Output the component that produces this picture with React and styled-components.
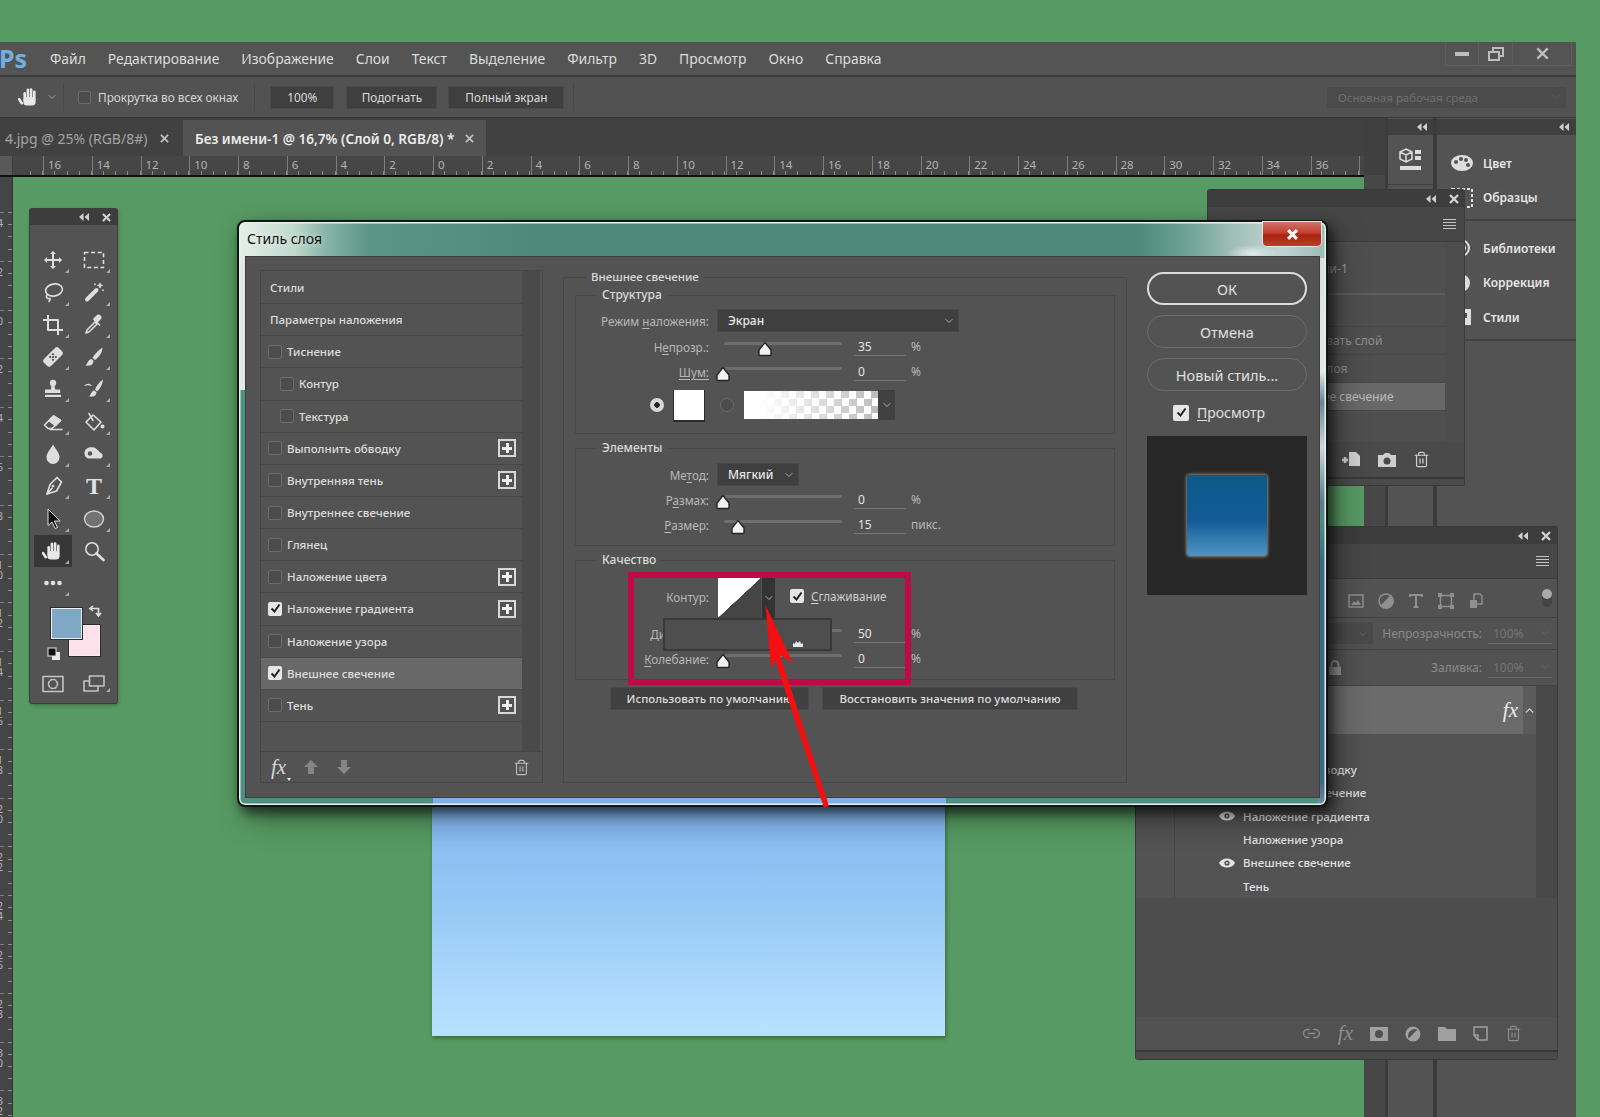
import React from 'react';
import styled, { createGlobalStyle } from 'styled-components';
import { Trash2, Link2, ChevronDown, ChevronUp } from 'lucide-react';

const Global = createGlobalStyle`
  html, body { margin: 0; padding: 0; background: #579a63; }
  * { box-sizing: border-box; }
  body { font-family: "Noto Sans", "Open Sans", sans-serif; }
`;

const Page = styled.div`
  position: relative; width: 1600px; height: 1117px; overflow: hidden;
  background: #579a63; padding-top: 42px; color: #ddd; font-size: 12px;
`;
const Workspace = styled.div`width: 1576px; height: 1075px; background: #535353; display: flex; flex-direction: column;`;

/* ---------- menu ---------- */
const MenuBar = styled.div`
  height: 35px; flex: none; display: flex; align-items: center; position: relative;
  border-bottom: 2px solid #3c3c3c; background: #545454;
`;
const Logo = styled.span`font: 700 25px/1 "Noto Sans", sans-serif; color: #74aee0; margin: 0 22px 0 -1px; width: 29px;`;
const MenuItems = styled.nav`display: flex; gap: 22px;`;
const MenuItem = styled.span`font-size: 13.9px; color: #dcdcdc;`;
const WinControls = styled.div`
  margin-left: auto; display: flex; height: 24px; align-self: flex-start; margin-right: 4px;
  border: 1px solid #5f5f5f; border-top: 0;
`;
const WinCell = styled.div`
  width: ${p => p.$w}px; display: flex; align-items: center; justify-content: center;
  & + & { border-left: 1px solid #5f5f5f; }
`;

/* ---------- options ---------- */
const OptionsBar = styled.div`
  height: 41px; flex: none; display: flex; align-items: center; background: #525252;
  border-bottom: 1px solid #3a3a3a; padding-left: 18px;
`;
const OptSep = styled.div`width: 1px; height: 28px; background: #484848; margin: 0 ${p => p.$r}px 0 ${p => p.$l}px;`;
const OptChev = styled.span`margin-left: 6px; display: flex;`;
const OptLabel = styled.span`font-size: 11.8px; color: #d6d6d6; margin-left: 7px;`;
const OptButton = styled.div`
  height: 21px; width: ${p => p.$w}px; margin-right: ${p => p.$mr}px; background: #3f3f3f; color: #ddd;
  font-size: 11.8px; display: flex; align-items: center; justify-content: center; box-shadow: 0 0 0 1px #4a4a4a;
`;
const WorkspaceSelect = styled.div`
  margin-left: auto; margin-right: 10px; width: 239px; height: 21px; background: #4b4b4b; color: #6f6f6f;
  font-size: 11.5px; display: flex; align-items: center; justify-content: space-between; padding: 0 4px 0 11px;
`;

/* ---------- main ---------- */
const Main = styled.div`flex: 1; display: flex; min-height: 0;`;
const DocColumn = styled.div`width: 1364px; flex: none; display: flex; flex-direction: column;`;
const TabBar = styled.div`height: 38px; flex: none; display: flex; background: #414141; padding-top: 2px;`;
const Tab = styled.div`
  width: ${p => p.$w}px; display: flex; align-items: center; padding-left: ${p => p.$pl}px; white-space: nowrap;
  background: ${p => p.$active ? '#535353' : 'transparent'};
  color: ${p => p.$active ? '#ececec' : '#a4a4a4'}; font-size: ${p => p.$active ? 13.6 : 14}px; font-weight: ${p => p.$active ? 600 : 400};
`;
const TabText = styled.span`width: ${p => p.$w}px; flex: none; overflow: hidden;`;
const HRuler = styled.div`
  height: 21px; flex: none; display: flex; background:
    repeating-linear-gradient(90deg, #8d8d8d 0 1px, transparent 1px 12.18px) 30px 100% / 100% 4px no-repeat, #464646;
  border-bottom: 2px solid #111; overflow: hidden;
`;
const RulerCorner = styled.div`width: 13px; flex: none; background: #595959; border-right: 1px solid #3c3c3c;`;
const RulerCells = styled.div`display: flex; padding-left: 30px;`;
const RulerCell = styled.div`
  width: 48.75px; flex: none; border-left: 1px solid #7e7e7e; color: #b4b4b4; font-size: 11.5px; line-height: 18px; padding-left: 4px;
`;
const CanvasRow = styled.div`flex: 1; display: flex; min-height: 0;`;
const VRuler = styled.div`
  width: 13px; flex: none; overflow: hidden; padding-top: 35px; border-right: 1px solid #333; background:
    repeating-linear-gradient(180deg, #8d8d8d 0 1px, transparent 1px 12.2px) 100% 35px / 4px 100% no-repeat, #454545;
`;
const VRulerCell = styled.div`
  height: 48.8px; border-top: 1px solid #7e7e7e; color: #b4b4b4; font-size: 10.5px; line-height: 10px;
  width: 7px; margin-left: -3px; padding-top: 5px; word-break: break-all;
`;
const Canvas = styled.div`flex: 1; position: relative; background: #579a63;`;
const DocImage = styled.div`
  position: absolute; left: 419px; top: 600px; width: 513px; height: 259px;
  background: linear-gradient(180deg, #7db1ee 0%, #94c6f5 45%, #b8e2ff 100%);
  box-shadow: 1px 2px 4px rgba(0,0,0,.35);
`;

/* ---------- dock ---------- */
const Dock = styled.div`flex: 1; display: flex; background: #3b3b3b;`;
const DockGutter = styled.div`width: 21px; flex: none; background: linear-gradient(180deg, #404040 57px, #474747 57px);`;
const DockIcons = styled.div`width: 45px; flex: none; margin-left: 3px; background: #535353;`;
const DockPanels = styled.div`flex: 1; margin-left: 4px; background: #535353;`;
const DockHead = styled.div`
  height: 16px; margin-top: 1px; background: #3f3f3f; display: flex; align-items: center; justify-content: flex-end; padding-right: ${p => p.$r}px;
`;
const DockIconGroup = styled.div`height: 50px; display: flex; align-items: center; justify-content: center; border-bottom: 1px solid #3f3f3f;`;
const DockGroup = styled.div`padding-top: ${p => p.$pt}px; padding-bottom: ${p => p.$pb}px; border-bottom: 2px solid #424242;`;
const DockEntry = styled.div`height: 34.5px; display: flex; align-items: center; padding-left: 14px; gap: 10px; font-weight: 600; font-size: 12px; color: #e6e6e6;`;

/* ---------- floating panels ---------- */
const ToolPanel = styled.div`
  position: absolute; left: 30px; top: 209px; width: 87px; height: 494px; background: #535353;
  box-shadow: 0 0 0 1px #3d3d3d, 1px 2px 4px rgba(0,0,0,.3); border-radius: 2px;
`;
const ToolHead = styled.div`height: 16px; background: #3d3d3d; display: flex; align-items: center; justify-content: flex-end; gap: 13px; padding-right: 6px; margin-bottom: 19px;`;
const ToolGrid = styled.div`display: grid; grid-template-columns: 38px 38px; grid-auto-rows: 32.3px; column-gap: 3px; padding-left: 4px;`;
const ToolCell = styled.div`
  position: relative; display: flex; align-items: center; justify-content: center;
  background: ${p => p.$on ? '#373737' : 'transparent'};
`;
const ToolT = styled.span`font: 700 24px/1 "Liberation Serif", serif; color: #e2e2e2;`;
const Corner = styled.i`
  position: absolute; right: 3px; bottom: 3px; width: 0; height: 0;
  border-left: 4px solid transparent; border-bottom: 4px solid #aaa;
`;
const SwatchArea = styled.div`position: relative; height: 70px; margin-top: 1px;`;
const SwatchTile = styled.div`
  position: absolute; left: ${p => p.$x}px; top: ${p => p.$y}px; width: 31px; height: 31px; background: ${p => p.$c};
  border: 1.5px solid #f0f0f0; box-shadow: 0 0 0 1px #2c2c2c;
`;
const SwatchMark = styled.svg`position: absolute; left: ${p => p.$x}px; top: ${p => p.$y}px;`;
const ToolFoot = styled.div`display: grid; grid-template-columns: 38px 38px; column-gap: 3px; padding-left: 4px; margin-top: 3px;`;

const Float = styled.div`
  position: absolute; left: ${p => p.$x}px; top: ${p => p.$y}px; width: ${p => p.$w}px; height: ${p => p.$h}px;
  background: #4d4d4d; box-shadow: 0 0 0 1px #3a3a3a; display: flex; flex-direction: column; border-radius: 2px;
`;
const FloatHead = styled.div`height: 17px; flex: none; background: #3d3d3d; display: flex; align-items: center; justify-content: flex-end; gap: 13px; padding-right: ${p => p.$r}px;`;
const FloatTabs = styled.div`height: 35px; flex: none; background: #474747; border-bottom: 1px solid #3c3c3c; display: flex; align-items: center; justify-content: flex-end; padding-right: ${p => p.$r}px;`;
const Burger = styled.div`width: 13px; height: 10px; background: repeating-linear-gradient(180deg, #c4c4c4 0 1px, transparent 1px 3px);`;
const HistList = styled.div`flex: 1; margin-right: 19px; background: #4f4f4f;`;
const HistSnap = styled.div`height: 53px; padding: 18px 0 0 68px; color: #9c9c9c; border-bottom: 2px solid #5d5d5d; font-size: 12px;`;
const HistRow = styled.div`
  height: ${p => p.$h}px; display: flex; align-items: center; padding-left: 75px; font-size: 12px; white-space: nowrap;
  background: ${p => p.$on ? '#686868' : 'transparent'}; color: ${p => p.$on ? '#bcbcbc' : '#909090'};
  border-bottom: 1px solid #474747;
`;
const PanelFoot = styled.div`
  height: ${p => p.$h}px; flex: none; display: flex; align-items: center; justify-content: flex-end;
  gap: ${p => p.$gap}px; padding-right: ${p => p.$r}px; background: ${p => p.$bg}; color: ${p => p.$c};
`;
const PanelStrip = styled.div`flex: none; height: ${p => p.$h}px; border-top: 2px solid #393939; background: #4a4a4a;`;

const LayerRow = styled.div`
  height: ${p => p.$h}px; flex: none; display: flex; align-items: center; justify-content: flex-end; gap: ${p => p.$gap || 6}px;
  padding: ${p => p.$pt || 0}px ${p => p.$r}px 0 0; border-bottom: 1px solid #434343; background: #525252; color: #8a8a8a; font-size: 12px;
`;
const BlankSelect = styled.div`width: 75px; height: 21px; margin-right: 3px; background: #494949; display: flex; align-items: center; justify-content: flex-end; padding-right: 4px;`;
const DimField = styled.div`width: 64px; height: 20px; border-bottom: 1px solid #6a6a6a; display: flex; justify-content: space-between; align-items: center; padding: 0 1px 0 5px; color: #747474;`;
const Toggle = styled.div`
  width: 10px; height: 18px; margin: -6px 0 0 ${p => p.$ml}px; border-radius: 5px; background: #444; position: relative;
  &::before { content: ""; position: absolute; left: 0; top: 0; width: 10px; height: 10px; border-radius: 50%; background: #aaa; }
`;
const LockIcon = styled.svg`margin-right: 83px;`;
const LayersBody = styled.div`height: 212px; flex: none; display: flex; background: #484848;`;
const LayersList = styled.div`width: 400px; flex: none; display: flex; flex-direction: column;`;
const LayerItem = styled.div`height: 48px; display: flex; background: #6b6b6b; justify-content: flex-end; align-items: center;`;
const FxMark = styled.span`font: italic 400 ${p => p.$s}px/1 "Liberation Serif", serif; color: ${p => p.$c}; margin-right: ${p => p.$mr || 0}px;`;
const LayerEnd = styled.div`width: 13px; align-self: stretch; background: #5b5b5b; display: flex; align-items: center; justify-content: center;`;
const Effects = styled.div`flex: 1; background: #535353; padding-left: 38px;`;
const EffectsInner = styled.div`height: 100%; border-left: 1px solid #484848; padding-top: 24px;`;
const EffectRow = styled.div`height: 23.3px; display: flex; align-items: center; padding-left: 68px; position: relative; font-size: 11.5px; color: #e2e2e2; font-weight: 500;`;
const EyeSlot = styled.span`position: absolute; left: 44px; display: flex;`;

/* ---------- dialog ---------- */
const Dialog = styled.div`
  position: absolute; left: 237px; top: 220px; width: 1091px; height: 587px; z-index: 5;
  border: 2px solid #0f1614; border-radius: 8px; display: flex; flex-direction: column;
  box-shadow: inset 0 0 0 1.5px #e8f0ee, 4px 6px 12px rgba(0,0,0,.6), 10px 12px 30px rgba(0,0,0,.35);
  background:
    radial-gradient(ellipse 26px 8px at 1013px 31px, rgba(255,255,255,.65), rgba(255,255,255,0)) no-repeat,
    linear-gradient(90deg, #e6efe8 0, #c0d9cf 55px, #8ab5a9 85px, #5c9488 130px, #4f887d 300px, #4f887d 900px, #6fa598 950px, #9cbcb4 990px, #c3d4d2 1040px, #9dbcb6 1086px) top / 100% 36px no-repeat,
    linear-gradient(180deg, #e3ebe7 0 168px, #4d8f80 168px) left / 8px 100% no-repeat,
    linear-gradient(180deg, #d6dddb 0, #e3e8e6 150px, #6c8494 180px, #cfd6d8 225px, #56808c 280px, #4e8e82 300px, #3a6a86 340px, #3a6a86 560px, #7d93a2 586px) right / 9px 100% no-repeat,
    linear-gradient(90deg, #4d8f80 0 194px, #7fb0e8 194px 707px, #4d8f80 707px) bottom / 100% 9px no-repeat,
    #535353;
`;
const TitleBar = styled.div`height: 34px; flex: none; display: flex; justify-content: space-between; padding-left: 8px;`;
const TitleText = styled.span`font-size: 14px; line-height: 34px; color: #111; text-shadow: 0 0 6px rgba(255,255,255,.7);`;
const CloseBtn = styled.div`
  width: 58px; height: 24px; margin-right: 5px; border-radius: 0 0 4px 4px; display: flex; align-items: center; justify-content: center;
  background: linear-gradient(180deg, #cf7468 0, #c2402f 45%, #a8220f 55%, #b9402a 100%); box-shadow: 0 0 0 1px #e7e7e7;
`;
const DialogBody = styled.div`
  flex: 1; margin: 0 6px 7px 6px; background: #535353; border: 1px solid #3f3f3f; padding: 13px 12px 0 14px;
  display: grid; grid-template-columns: 283px 564px 160px; column-gap: 20px; align-items: start;
`;
const StylePanel = styled.div`height: 513px; border: 1px solid #474747; display: flex; flex-direction: column;`;
const StyleTop = styled.div`height: 481px; flex: none; display: grid; grid-template-columns: 261px 1fr; border-bottom: 1px solid #474747;`;
const StyleRows = styled.div`padding-top: 1px;`;
const StyleRow = styled.div`
  height: 32.15px; display: flex; align-items: center; gap: 5px; padding-left: ${p => p.$pl}px; padding-right: 6px;
  border-bottom: 1px solid #484848; font-size: 11.5px; font-weight: 500; white-space: nowrap;
  background: ${p => p.$on ? '#686868' : 'transparent'}; color: #dedede;
`;
const Track = styled.div`width: 18px; margin: 0 2px 0 0; background: #4a4a4a;`;
const Plus = styled.div`
  margin-left: auto; width: 18px; height: 18px; border: 2px solid #d8d8d8; color: #e8e8e8; position: relative;
  &::before { content: ""; position: absolute; left: 2px; right: 2px; top: 5.5px; height: 3px; background: #eee; }
  &::after { content: ""; position: absolute; top: 2px; bottom: 2px; left: 5.5px; width: 3px; background: #eee; }
`;
const StyleFoot = styled.div`flex: 1; display: flex; align-items: center; padding: 0 12px 0 10px; gap: 17px; color: #8a8a8a;`;
const FxBox = styled.span`position: relative; display: flex;`;
const FxCorner = styled.i`position: absolute; right: -5px; bottom: -3px; width: 0; height: 0; border: 2.5px solid transparent; border-top: 3px solid #eee; border-bottom: 0;`;
const Spacer = styled.div`flex: 1;`;
const Box = styled.span`
  flex: none; display: inline-flex; width: ${p => p.$s || 14}px; height: ${p => p.$s || 14}px; border-radius: 2px; align-items: center; justify-content: center;
  background: ${p => p.$on ? '#e6e6e6' : '#4c4c4c'}; border: ${p => p.$on ? '0' : '1.5px solid #6c6c6c'};
`;

const Group = styled.fieldset`
  margin: ${p => p.$mt || 0}px 0 0; padding: 0 ${p => p.$px}px; border: 1px solid #484848; height: ${p => p.$h}px; min-width: 0;
`;
const Legend = styled.legend`
  margin-left: ${p => p.$ml}px; padding: 0 5px; font-size: ${p => p.$fs || 12}px; line-height: 14px; color: #dadada; font-weight: 500;
`;
const Row = styled.div`display: flex; align-items: flex-start; height: ${p => p.$h || 22}px; margin-top: ${p => p.$mt}px;`;
const Label = styled.div`width: 133px; flex: none; text-align: right; line-height: ${p => p.$lh || 22}px; font-size: 11.7px; color: #b8b8b8; white-space: nowrap;`;
const Under = styled.u`text-underline-offset: 2px;`;
const Select = styled.div`
  margin-left: 9px; width: ${p => p.$w}px; height: 21px; background: #3f3f3f; box-shadow: 0 0 0 1px #484848; color: #e6e6e6;
  display: flex; align-items: center; justify-content: space-between; padding: 0 3px 0 10px; font-size: 12px; font-weight: 500;
`;
const Slider = styled.div`position: relative; width: 118px; height: 3px; margin: 6px 0 0 15px; background: #6e6e6e; border-radius: 2px; flex: none;`;
const Thumb = styled.svg`position: absolute; left: ${p => p.$x - 8}px; top: -1px;`;
const ValueField = styled.div`margin-left: 12px; width: 52px; height: 20px; flex: none; border-bottom: 1px solid #777; padding-left: 4px; line-height: 22px; font-size: 12px; color: #e4e4e4;`;
const Unit = styled.span`margin-left: 5px; line-height: 22px; font-size: 12px; color: #b8b8b8;`;
const ColorRow = styled.div`display: flex; align-items: center; height: 30px; margin-top: 7px; padding-left: 74px;`;
const Radio = styled.span`
  width: 14px; height: 14px; flex: none; border-radius: 50%; margin-right: ${p => p.$mr}px;
  ${p => p.$on ? 'background: radial-gradient(circle, #222 0 2.5px, #d8d8d8 3px);' : 'border: 1.5px solid #6c6c6c; background: #4c4c4c;'}
`;
const ColorChip = styled.div`width: 30px; height: 30px; flex: none; margin-right: 16px; background: #fff; box-shadow: 0 1px 0 1px #2c2c2c;`;
const GradChip = styled.div`
  width: 134px; height: 28px; flex: none;
  background: linear-gradient(90deg, #fff 12%, rgba(255,255,255,0) 100%), repeating-conic-gradient(#bdbdbd 0 25%, #fff 0 50%) 0 0 / 15px 15px;
`;
const ChipArrow = styled.div`width: 17px; height: 30px; flex: none; background: #414141; display: flex; align-items: center; justify-content: center;`;
const QualityBody = styled.div`position: relative; padding-top: 11px;`;
const ContourRow = styled.div`display: flex; align-items: flex-start; height: 40px;`;
const ContourChip = styled.div`margin-left: 9px; width: 43px; height: 40px; flex: none; background: linear-gradient(to bottom right, #fff 49.5%, #454545 50%);`;
const ContourArrow = styled.div`margin-left: 1px; width: 13px; height: 40px; flex: none; background: #333; display: flex; align-items: center; justify-content: center;`;
const CheckLabel = styled.div`margin: 11px 0 0 15px; display: flex; align-items: center; gap: 7px; font-size: 11.7px; color: #cfcfcf; line-height: 14px;`;
const Flyout = styled.div`
  position: absolute; left: 87px; top: 51px; width: 169px; height: 33px; background: #4e4e4e; border: 2px solid #393939; z-index: 1;
`;
const Crown = styled.svg`position: absolute; right: 27px; bottom: 2px;`;
const RedFrame = styled.div`position: absolute; left: 52px; top: 5px; width: 283px; height: 113px; border: 6px solid #bf0a45; z-index: 2; border-radius: 1px;`;
const DefaultsRow = styled.div`display: flex; gap: 15px; margin: 8px 0 0 36px;`;
const DefaultBtn = styled.div`
  width: ${p => p.$w}px; height: 21px; background: #404040; box-shadow: 0 0 0 1px #4a4a4a; color: #dedede; font-size: 11.5px; font-weight: 500;
  display: flex; align-items: center; justify-content: center; white-space: nowrap;
`;
const Side = styled.div`display: flex; flex-direction: column; padding-top: 2px;`;
const PillBtn = styled.div`
  height: 33px; margin-bottom: 10px; border-radius: 17px; display: flex; align-items: center; justify-content: center; font-size: 14.5px; color: #e0e0e0;
  border: ${p => p.$main ? '2px solid #dcdcdc' : '1.5px solid #6c6c6c'};
`;
const PreviewCheck = styled.div`display: flex; align-items: center; gap: 8px; padding-left: 26px; font-size: 14px; color: #e0e0e0; height: 17px; margin-top: 3px;`;
const PreviewBox = styled.div`margin-top: 15px; height: 159px; background: #272727; display: flex; align-items: center; justify-content: center;`;
const PreviewTile = styled.div`
  width: 80px; height: 81px; border-radius: 3px; background: linear-gradient(180deg, #0d5a88 0, #115a98 55%, #4f94c2 100%);
  box-shadow: 0 0 3px 1px #8d8475;
`;
const Arrow = styled.svg`position: absolute; left: 521px; top: 378px; z-index: 3;`;

/* ---------- icons ---------- */
const Svg = ({ s = 22, children, vb = '0 0 22 22' }) => (
  <svg width={s} height={s} viewBox={vb} fill="none" stroke="#dedede" strokeWidth="1.6" strokeLinecap="round" strokeLinejoin="round">{children}</svg>
);
const handShape = (
  <g fill="#e8e8e8" stroke="none">
    <rect x="5.4" y="6" width="2.6" height="9" rx="1.3" /><rect x="8.6" y="2.6" width="2.6" height="11" rx="1.3" />
    <rect x="11.8" y="2.2" width="2.6" height="11" rx="1.3" /><rect x="15" y="4.6" width="2.6" height="10" rx="1.3" />
    <rect x="5.4" y="11" width="12.2" height="8.6" rx="3.6" />
    <rect x="1" y="11.4" width="2.6" height="7.6" rx="1.3" transform="rotate(-35 2.3 15)" />
  </g>
);
const check = <svg width="11" height="11" viewBox="0 0 11 11"><path d="M1.5 5.5l3 3 5-7" fill="none" stroke="#222" strokeWidth="2" /></svg>;
const Tools = {
  move: <path d="M11 2l3 3h-2v5h5V8l3 3-3 3v-2h-5v5h2l-3 3-3-3h2v-5H5v2l-3-3 3-3v2h5V5H8z" fill="#dedede" stroke="none" />,
  marquee: <rect x="1.5" y="3.5" width="19" height="15" strokeDasharray="4 2.6" strokeLinecap="butt" />,
  lasso: <><ellipse cx="12" cy="9" rx="8.5" ry="6" transform="rotate(-10 12 9)" /><path d="M5 14c-1.5 2 0 4 2 3.5s1 2 0 3" /></>,
  wand: <><path d="M4 18.5L13.5 9" strokeWidth="4" /><path d="M17 2.5v4M15 4.5h4M20 9v.5M12 3v.5" /></>,
  crop: <path d="M6 1v15h15M1 6h15v15" strokeWidth="2" strokeLinecap="butt" />,
  pipette: <><path d="M12 8l-8 8-1 3 3-1 8-8z" /><path d="M11 5.5l5.5 5.5M14 8l3-3a2 2 0 0 0-3-3l-3 3z" fill="#dedede" /></>,
  heal: <g transform="rotate(-45 11 11)"><rect x="0.5" y="6" width="21" height="10" rx="3" fill="#dedede" stroke="none" /><g fill="#535353" stroke="none"><circle cx="9" cy="9" r="1.1" /><circle cx="13" cy="9" r="1.1" /><circle cx="9" cy="13" r="1.1" /><circle cx="13" cy="13" r="1.1" /><circle cx="11" cy="11" r="1.1" /></g></g>,
  brush: <g fill="#dedede" stroke="none"><path d="M19.5 1.5c-4 2.5-8 6.5-10 10.5l2.5 2c3.5-2.5 7.5-7.5 7.5-12.5z" /><path d="M8.5 13c-3 0-3.5 4-6 6.5 3.5.5 8 0 8-4.5z" /></g>,
  stamp: <g fill="#dedede" stroke="none"><circle cx="11" cy="5" r="3.2" /><path d="M9.6 7h2.8l.8 4.5h5V15H3v-3.5h5.8z" /><rect x="3" y="16.8" width="16" height="2.2" /></g>,
  mixer: <g fill="#dedede" stroke="none"><path d="M20 1.5c-3.5 2.5-6.5 6-8 10l2 2c3-2.5 5.5-7 6-12z" /><path d="M11.5 12.5c-3 0-3 3.500-5.500 6 3.500.5 7 0 7.500-4zM1 8c3-3 6-3 8 0-3-1-5-1-8 0z" /></g>,
  eraser: <><path d="M2.5 14l9-9 7 4.5-8.5 8H6z" /><path d="M11.5 5l7 4.5-5 5-6.5-5z" fill="#dedede" /><path d="M8 18.5h12" strokeWidth="1.4" /></>,
  bucket: <><path d="M3 11l7-7 8 7-7 8z" /><path d="M6 2.5l4 7" /><circle cx="19.5" cy="15.5" r="2" fill="#dedede" stroke="none" /></>,
  drop: <path d="M11 1.5c3 5.5 6.5 8 6.5 13a6.5 6.5 0 0 1-13 0c0-5 3.5-7.5 6.500-13z" fill="#dedede" stroke="none" />,
  smudge: <><path d="M1.5 10c0-4.5 5-6.5 9.5-5.5 3.5 1 4.5 4.5 7 5.5 2.5 1 2 5-.5 5.5H6c-2.5 0-4.5-2.5-4.5-5.5z" fill="#dedede" stroke="none" /><circle cx="7" cy="10.5" r="2.2" fill="#535353" stroke="none" /></>,
  pen: <><path d="M15 2.5l4.5 4.5-5 9-9.5 3 3-9.5z" /><path d="M5 19l5.2-6" /><circle cx="11" cy="11" r="1.3" fill="#dedede" stroke="none" /></>,
  path: <path d="M6 1.5v16l4-3.5 3.2 6.5 2.3-1-3.2-6.5h5.5z" fill="#111" stroke="#dedede" strokeWidth="1" />,
  ellipse: <ellipse cx="11" cy="11" rx="9.5" ry="8" fill="#727272" stroke="#cfcfcf" strokeWidth="1.4" />,
  hand: handShape,
  zoom: <><circle cx="9" cy="9" r="6.2" /><path d="M13.5 13.5L20.5 20" strokeWidth="2.6" /></>,
  dots: <g fill="#e2e2e2" stroke="none"><circle cx="4.5" cy="11" r="2.3" /><circle cx="11" cy="11" r="2.3" /><circle cx="17.5" cy="11" r="2.3" /></g>,
  mask: <g stroke="#c4c4c4"><rect x="1" y="3.5" width="20" height="15" /><circle cx="11" cy="11" r="4.5" strokeDasharray="2 1.6" /></g>,
  screen: <g stroke="#c4c4c4"><rect x="6.5" y="3" width="14.5" height="10" /><path d="M6.5 8H1v10h14v-5" /></g>,
};
const toolRows = [
  ['move', 'marquee'], ['lasso', 'wand'], ['crop', 'pipette'], ['heal', 'brush'], ['stamp', 'mixer'],
  ['eraser', 'bucket'], ['drop', 'smudge'], ['pen', 'T'], ['path', 'ellipse'], ['hand', 'zoom'], ['dots', null],
];
const noCorner = new Set(['zoom']);

const Eye = ({ c = '#e4e4e4' }) => (
  <svg width="16" height="10" viewBox="0 0 16 10"><path d="M0 5c3-6 13-6 16 0-3 6-13 6-16 0z" fill={c} /><circle cx="8" cy="5" r="2.6" fill="#535353" /><circle cx="8" cy="5" r="1" fill={c} /></svg>
);
const Collapse = ({ c = '#d0d0d0' }) => (
  <svg width="10" height="8" viewBox="0 0 10 8"><path d="M4.5 0v8L0 4zM10 0v8L5.5 4z" fill={c} /></svg>
);
const Cross = ({ s = 10, c = '#d0d0d0', w = 2.4 }) => (
  <svg width={s} height={s} viewBox="0 0 10 10"><path d="M1 1l8 8M9 1l-8 8" stroke={c} strokeWidth={w} /></svg>
);
const Chev = ({ c = '#b8b8b8', s = 12 }) => <ChevronDown size={s} color={c} strokeWidth={1.8} />;
const ThumbIcon = ({ x }) => (
  <Thumb $x={x} width="16" height="16" viewBox="0 0 16 16"><path d="M8 1.5L14 9v4.5a1 1 0 0 1-1 1H3a1 1 0 0 1-1-1V9z" fill="#f2f2f2" stroke="#242424" strokeWidth="1.4" /></Thumb>
);

const menu = ['Файл', 'Редактирование', 'Изображение', 'Слои', 'Текст', 'Выделение', 'Фильтр', '3D', 'Просмотр', 'Окно', 'Справка'];
const hNums = [16, 14, 12, 10, 8, 6, 4, 2, 0, 2, 4, 6, 8, 10, 12, 14, 16, 18, 20, 22, 24, 26, 28, 30, 32, 34, 36, ''];
const vNums = [4, 2, 0, 2, 4, 6, 8, 10, 12, 14, 16, 18, 20, 22, 24, 26, 28, 30, 32];
const styles = [
  { t: 'Стили', pl: 9 }, { t: 'Параметры наложения', pl: 9 },
  { t: 'Тиснение', pl: 7, box: 1 }, { t: 'Контур', pl: 19, box: 1 }, { t: 'Текстура', pl: 19, box: 1 },
  { t: 'Выполнить обводку', pl: 7, box: 1, plus: 1 }, { t: 'Внутренняя тень', pl: 7, box: 1, plus: 1 },
  { t: 'Внутреннее свечение', pl: 7, box: 1 }, { t: 'Глянец', pl: 7, box: 1 },
  { t: 'Наложение цвета', pl: 7, box: 1, plus: 1 }, { t: 'Наложение градиента', pl: 7, box: 1, on: 1, plus: 1 },
  { t: 'Наложение узора', pl: 7, box: 1 }, { t: 'Внешнее свечение', pl: 7, box: 1, on: 1, sel: 1 },
  { t: 'Тень', pl: 7, box: 1, plus: 1 },
];
const effects = [
  { t: 'Выполнить обводку' }, { t: 'Внутреннее свечение' }, { t: 'Наложение градиента', eye: 1 },
  { t: 'Наложение узора' }, { t: 'Внешнее свечение', eye: 1 }, { t: 'Тень' },
];

const SliderRow = ({ label, x, value, unit, mt }) => (
  <Row $mt={mt}>
    <Label>{label}</Label>
    <Slider><ThumbIcon x={x} /></Slider>
    <ValueField>{value}</ValueField>
    <Unit>{unit}</Unit>
  </Row>
);

export default function App() {
  return (
    <Page>
      <Global />
      <Workspace>
        <MenuBar>
          <Logo>Ps</Logo>
          <MenuItems>{menu.map(m => <MenuItem key={m}>{m}</MenuItem>)}</MenuItems>
          <WinControls>
            <WinCell $w={32}><svg width="14" height="4"><rect width="14" height="4" fill="#bdbdbd" /></svg></WinCell>
            <WinCell $w={34}><svg width="16" height="14" viewBox="0 0 16 14" fill="none" stroke="#bdbdbd" strokeWidth="2"><rect x="5" y="1" width="10" height="8" /><rect x="1" y="5" width="10" height="8" fill="#535353" /></svg></WinCell>
            <WinCell $w={59}><Cross s={13} c="#bdbdbd" w={1.8} /></WinCell>
          </WinControls>
        </MenuBar>
        <OptionsBar>
          <Svg>{handShape}</Svg>
          <OptChev><Chev c="#a8a8a8" /></OptChev>
          <OptSep $l={5} $r={14} />
          <Box $s={13} />
          <OptLabel>Прокрутка во всех окнах</OptLabel>
          <OptSep $l={16} $r={16} />
          <OptButton $w={62} $mr={14}>100%</OptButton>
          <OptButton $w={89} $mr={13}>Подогнать</OptButton>
          <OptButton $w={114} $mr={10}>Полный экран</OptButton>
          <OptSep $l={0} $r={0} />
          <WorkspaceSelect>Основная рабочая среда<Chev c="#5f5f5f" /></WorkspaceSelect>
        </OptionsBar>
        <Main>
          <DocColumn>
            <TabBar>
              <Tab $w={183} $pl={5}>
                <TabText $w={155}>4.jpg @ 25% (RGB/8#)</TabText>
                <Cross s={9} c="#c0c0c0" w={2} />
              </Tab>
              <Tab $w={303} $active $pl={12}>
                <TabText $w={270}>Без имени-1 @ 16,7% (Слой 0, RGB/8) *</TabText>
                <Cross s={9} c="#c0c0c0" w={2} />
              </Tab>
            </TabBar>
            <HRuler>
              <RulerCorner />
              <RulerCells>{hNums.map((n, i) => <RulerCell key={i}>{n}</RulerCell>)}</RulerCells>
            </HRuler>
            <CanvasRow>
              <VRuler>{vNums.map((n, i) => <VRulerCell key={i}>{n}</VRulerCell>)}</VRuler>
              <Canvas><DocImage /></Canvas>
            </CanvasRow>
          </DocColumn>
          <Dock>
            <DockGutter />
            <DockIcons>
              <DockHead $r={6}><Collapse /></DockHead>
              <DockIconGroup>
                <svg width="24" height="24" viewBox="0 0 24 24" fill="#dedede"><path d="M7 1l6 3v7l-6 3-6-3V4zM1 4l6 3 6-3M7 7v7" fill="none" stroke="#dedede" strokeWidth="1.5" /><rect x="16" y="2" width="6" height="4" /><rect x="16" y="8" width="6" height="4" /><rect x="1" y="18" width="21" height="4" /></svg>
              </DockIconGroup>
            </DockIcons>
            <DockPanels>
              <DockHead $r={7}><Collapse /></DockHead>
              <DockGroup $pt={11} $pb={4}>
                <DockEntry>
                  <svg width="22" height="18" viewBox="0 0 22 18"><ellipse cx="11" cy="9" rx="11" ry="8" fill="#dedede" /><g fill="#535353"><circle cx="5" cy="8" r="2" /><circle cx="10" cy="5" r="2" /><circle cx="15" cy="6" r="2" /><circle cx="17" cy="11" r="2" /></g></svg>
                  Цвет
                </DockEntry>
                <DockEntry>
                  <svg width="22" height="20" viewBox="0 0 22 20" fill="none" stroke="#dedede" strokeWidth="2"><rect x="1" y="1" width="20" height="18" strokeDasharray="3 2" /></svg>
                  Образцы
                </DockEntry>
              </DockGroup>
              <DockGroup $pt={10} $pb={4}>
                <DockEntry>
                  <svg width="22" height="20" viewBox="0 0 22 20" fill="none" stroke="#dedede" strokeWidth="2"><circle cx="10" cy="10" r="8" /><circle cx="10" cy="10" r="4" /></svg>
                  Библиотеки
                </DockEntry>
                <DockEntry>
                  <svg width="22" height="20" viewBox="0 0 22 20"><circle cx="10" cy="10" r="8" fill="none" stroke="#dedede" strokeWidth="2" /><path d="M10 2a8 8 0 0 1 0 16z" fill="#dedede" /></svg>
                  Коррекция
                </DockEntry>
                <DockEntry>
                  <svg width="22" height="20" viewBox="0 0 22 20"><rect x="2" y="2" width="18" height="16" fill="#dedede" /><rect x="11" y="6" width="5" height="5" fill="#535353" /></svg>
                  Стили
                </DockEntry>
              </DockGroup>
            </DockPanels>
          </Dock>
        </Main>
      </Workspace>

      <ToolPanel>
        <ToolHead><Collapse /><Cross s={9} /></ToolHead>
        <ToolGrid>
          {toolRows.flat().map((t, i) => (
            t === null ? <ToolCell key={i} /> : (
              <ToolCell key={i} $on={t === 'hand'}>
                {t === 'T' ? <ToolT>T</ToolT> : <Svg>{Tools[t]}</Svg>}
                {!noCorner.has(t) && <Corner />}
              </ToolCell>
            )
          ))}
        </ToolGrid>
        <SwatchArea>
          <SwatchTile $x={39} $y={25} $c="#fde0ea" />
          <SwatchTile $x={21} $y={8} $c="#7fa8c4" />
          <SwatchMark $x={59} $y={4} width="14" height="14" viewBox="0 0 14 14" fill="none" stroke="#e0e0e0" strokeWidth="1.6"><path d="M4 2L1 4.5 4 7M1 4.5h8.5V11M7 9l2.5 3L12 9" /></SwatchMark>
          <SwatchMark $x={17} $y={47} width="14" height="14" viewBox="0 0 14 14"><rect x="5" y="5" width="8" height="8" fill="#e8e8e8" /><rect x="1" y="1" width="8" height="8" fill="#111" stroke="#e8e8e8" /></SwatchMark>
        </SwatchArea>
        <ToolFoot>
          <ToolCell><Svg>{Tools.mask}</Svg></ToolCell>
          <ToolCell><Svg>{Tools.screen}</Svg><Corner /></ToolCell>
        </ToolFoot>
      </ToolPanel>

      <Float $x={1208} $y={190} $w={256} $h={295}>
        <FloatHead $r={5}><Collapse /><Cross s={10} /></FloatHead>
        <FloatTabs $r={8}><Burger /></FloatTabs>
        <HistList>
          <HistSnap>Без имени-1</HistSnap>
          <HistRow $h={32} />
          <HistRow $h={28}>Нарисовать слой</HistRow>
          <HistRow $h={28}>Стиль слоя</HistRow>
          <HistRow $h={28} $on>Внешнее свечение</HistRow>
        </HistList>
        <PanelFoot $h={35} $gap={16} $r={34} $bg="#4a4a4a" $c="#cfcfcf">
          <svg width="20" height="18" viewBox="0 0 20 18" fill="#cfcfcf"><path d="M8 1h7l4 4v10H8z" /><path d="M1 9h6M4 6v6" stroke="#cfcfcf" strokeWidth="2.5" /></svg>
          <svg width="20" height="16" viewBox="0 0 20 16"><path d="M1 3h5l2-2h4l2 2h5v12H1z" fill="#cfcfcf" /><circle cx="10" cy="9" r="3.5" fill="#4a4a4a" /></svg>
          <Trash2 size={17} strokeWidth={1.7} />
        </PanelFoot>
        <PanelStrip $h={8} />
      </Float>

      <Float $x={1136} $y={527} $w={421} $h={532}>
        <FloatHead $r={6}><Collapse /><Cross s={10} /></FloatHead>
        <FloatTabs $r={8}><Burger /></FloatTabs>
        <LayerRow $h={39} $r={5} $gap={14} $pt={5}>
          {['image', 'adj', 'T', 'shape', 'smart'].map(k => (
            <svg key={k} width="16" height="16" viewBox="0 0 16 16" fill="none" stroke="#8f8f8f" strokeWidth="1.5">
              {k === 'image' && <><rect x="1" y="2" width="14" height="12" /><path d="M3 12l3-4 2 2 2-3 3 5z" fill="#8f8f8f" stroke="none" /></>}
              {k === 'adj' && <><circle cx="8" cy="8" r="7" /><path d="M3 13L13 3A7 7 0 0 1 3 13z" fill="#8f8f8f" /></>}
              {k === 'T' && <path d="M2 4V2h12v2M8 2v12M5.5 14h5" strokeWidth="2" />}
              {k === 'shape' && <><rect x="2.5" y="2.5" width="11" height="11" /><g fill="#8f8f8f" stroke="none"><rect width="4" height="4" /><rect x="12" width="4" height="4" /><rect y="12" width="4" height="4" /><rect x="12" y="12" width="4" height="4" /></g></>}
              {k === 'smart' && <><path d="M6 1h6l2 2v8H6z" /><rect x="2" y="7" width="7" height="8" fill="#8f8f8f" stroke="none" /></>}
            </svg>
          ))}
          <Toggle $ml={44} />
        </LayerRow>
        <LayerRow $h={32} $r={5}>
          <BlankSelect><Chev c="#666" /></BlankSelect>
          Непрозрачность:
          <DimField>100%<Chev c="#666" /></DimField>
        </LayerRow>
        <LayerRow $h={36} $r={5}>
          <LockIcon width="14" height="15" viewBox="0 0 14 15"><path d="M3.5 7V4.5a3.5 3.5 0 0 1 7 0V7" fill="none" stroke="#969696" strokeWidth="2" /><rect x="1" y="7" width="12" height="8" fill="#969696" /></LockIcon>
          Заливка:
          <DimField>100%<Chev c="#666" /></DimField>
        </LayerRow>
        <LayersBody>
          <LayersList>
            <LayerItem>
              <FxMark $s={21} $c="#ececec" $mr={5}>fx</FxMark>
              <LayerEnd><ChevronUp size={13} color="#dcdcdc" strokeWidth={2} /></LayerEnd>
            </LayerItem>
            <Effects>
              <EffectsInner>
                {effects.map(e => (
                  <EffectRow key={e.t}>
                    {e.eye && <EyeSlot><Eye /></EyeSlot>}
                    {e.t}
                  </EffectRow>
                ))}
              </EffectsInner>
            </Effects>
          </LayersList>
        </LayersBody>
        <Spacer />
        <PanelFoot $h={33} $gap={17} $r={35} $bg="#515151" $c="#8e8e8e">
          <Link2 size={19} strokeWidth={1.7} />
          <FxMark $s={21} $c="#8e8e8e">fx</FxMark>
          <svg width="18" height="14" viewBox="0 0 18 14"><rect width="18" height="14" fill="#a0a0a0" /><circle cx="9" cy="7" r="4" fill="#515151" /></svg>
          <svg width="16" height="16" viewBox="0 0 16 16"><circle cx="8" cy="8" r="7.5" fill="#a0a0a0" /><path d="M3.5 12.5a7 7 0 0 1 9-9z" fill="#515151" /></svg>
          <svg width="18" height="14" viewBox="0 0 18 14"><path d="M0 0h7l2 2h9v12H0z" fill="#a0a0a0" /></svg>
          <svg width="15" height="15" viewBox="0 0 15 15" fill="none" stroke="#a0a0a0" strokeWidth="1.5"><path d="M1 1h13v13H5V9H1zM1 9l4 5" /></svg>
          <Trash2 size={17} strokeWidth={1.6} />
        </PanelFoot>
        <PanelStrip $h={9} />
      </Float>

      <Dialog>
        <TitleBar>
          <TitleText>Стиль слоя</TitleText>
          <CloseBtn><Cross s={11} c="#fff" w={2.8} /></CloseBtn>
        </TitleBar>
        <DialogBody>
          <StylePanel>
            <StyleTop>
              <StyleRows>
                {styles.map(s => (
                  <StyleRow key={s.t} $pl={s.pl} $on={s.sel}>
                    {s.box && <Box $on={s.on}>{s.on && check}</Box>}
                    {s.t}
                    {s.plus && <Plus />}
                  </StyleRow>
                ))}
              </StyleRows>
              <Track />
            </StyleTop>
            <StyleFoot>
              <FxBox><FxMark $s={21} $c="#d8d8d8">fx</FxMark><FxCorner /></FxBox>
              <svg width="16" height="16" viewBox="0 0 16 16"><path d="M8 1l7 7h-4v7H5V8H1z" fill="#858585" /></svg>
              <svg width="16" height="16" viewBox="0 0 16 16"><path d="M8 15L1 8h4V1h6v7h4z" fill="#858585" /></svg>
              <Spacer />
              <Trash2 size={17} color="#bcbcbc" strokeWidth={1.6} />
            </StyleFoot>
          </StylePanel>

          <Group $h={513} $px={11}>
            <Legend $ml={11} $fs={11.5}>Внешнее свечение</Legend>
            <Group $h={146} $mt={4} $px={0}>
              <Legend $ml={21}>Структура</Legend>
              <Row $mt={8} $h={21}>
                <Label>Режим <Under>н</Under>аложения:</Label>
                <Select $w={240}>Экран<Chev /></Select>
              </Row>
              <SliderRow mt={5} label={<>Н<Under>е</Under>прозр.:</>} x={41} value="35" unit="%" />
              <SliderRow mt={3} label={<Under>Шум:</Under>} x={-1} value="0" unit="%" />
              <ColorRow>
                <Radio $on $mr={10} />
                <ColorChip />
                <Radio $mr={10} />
                <GradChip />
                <ChipArrow><Chev c="#b4b4b4" /></ChipArrow>
              </ColorRow>
            </Group>
            <Group $h={105} $mt={7} $px={0}>
              <Legend $ml={21}>Элементы</Legend>
              <Row $mt={9} $h={21}>
                <Label>Ме<Under>т</Under>од:</Label>
                <Select $w={80}>Мягкий<Chev /></Select>
              </Row>
              <SliderRow mt={4} label={<>Р<Under>а</Under>змах:</>} x={-1} value="0" unit="%" />
              <SliderRow mt={3} label={<><Under>Р</Under>азмер:</>} x={13.5} value="15" unit="пикс." />
            </Group>
            <Group $h={127} $mt={7} $px={0}>
              <Legend $ml={21}>Качество</Legend>
              <QualityBody>
                <ContourRow>
                  <Label $lh={38}>Контур:</Label>
                  <ContourChip />
                  <ContourArrow><Chev c="#c0c0c0" /></ContourArrow>
                  <CheckLabel><Box $on>{check}</Box><span><Under>С</Under>глаживание</span></CheckLabel>
                </ContourRow>
                <SliderRow mt={5} label="Диапазон:" x={41} value="50" unit="%" />
                <SliderRow mt={3} label={<><Under>К</Under>олебание:</>} x={-1} value="0" unit="%" />
                <Flyout>
                  <Crown width="10" height="6" viewBox="0 0 10 6"><path d="M0 6V2l2 1 1-3 2 2 2-2 1 3 2-1v4z" fill="#e8e8e8" /></Crown>
                </Flyout>
                <RedFrame />
              </QualityBody>
            </Group>
            <DefaultsRow>
              <DefaultBtn $w={197}>Использовать по умолчанию</DefaultBtn>
              <DefaultBtn $w={254}>Восстановить значения по умолчанию</DefaultBtn>
            </DefaultsRow>
          </Group>

          <Side>
            <PillBtn $main>ОК</PillBtn>
            <PillBtn>Отмена</PillBtn>
            <PillBtn>Новый стиль...</PillBtn>
            <PreviewCheck>
              <Box $on $s={16}>{check}</Box>
              <span><Under>П</Under>росмотр</span>
            </PreviewCheck>
            <PreviewBox><PreviewTile /></PreviewBox>
          </Side>
        </DialogBody>
        <Arrow width="75" height="212" viewBox="760 600 75 212">
          <polygon points="765.5,605 793,663 780,655 829,806 824,808 775,660 771,668" fill="#f30f12" />
        </Arrow>
      </Dialog>
    </Page>
  );
}
